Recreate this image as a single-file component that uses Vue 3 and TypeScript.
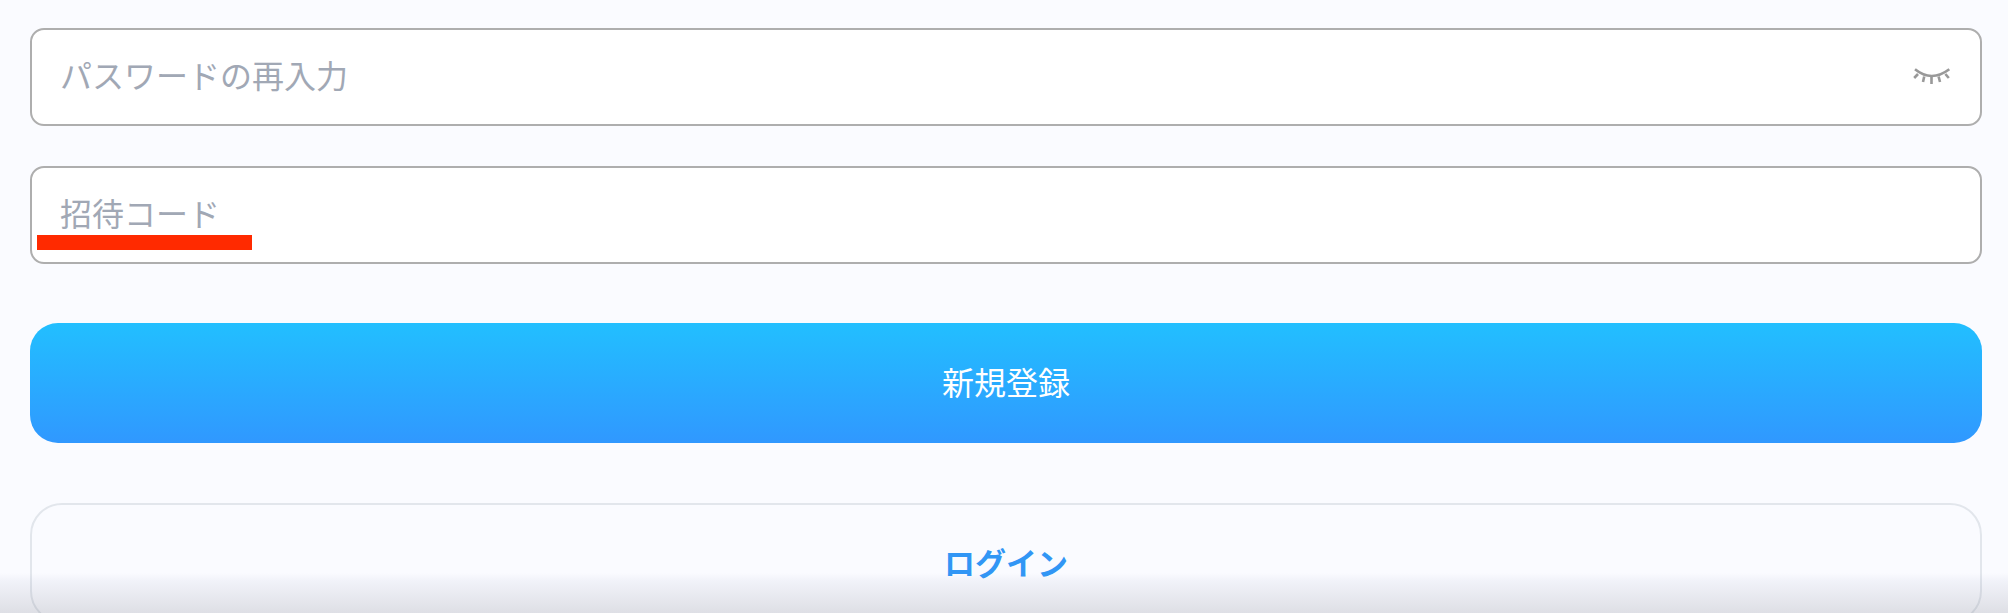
<script setup lang="ts">
const lashes: string[] = [
  'M1.2 10 L5 6',
  'M10 14 L11.2 8.5',
  'M18.5 16 L18.5 9',
  'M27 14 L25.6 8.5',
  'M35.8 10 L32.4 6',
]
</script>

<template>
  <main class="page">
    <div class="field">
      <input class="input" type="password" placeholder="パスワードの再入力" />
      <svg class="eye" width="38" height="17" viewBox="0 0 38 17" fill="none" aria-hidden="true">
        <path d="M2 1.3 Q18.5 14.7 36.3 1.3" />
        <path v-for="(d, i) in lashes" :key="i" :d="d" />
      </svg>
    </div>
    <div class="field second">
      <input class="input" type="text" placeholder="招待コード" />
      <span class="mark"></span>
    </div>
    <button class="btn primary" type="button">新規登録</button>
    <button class="btn secondary" type="button">ログイン</button>
    <div class="fade"></div>
  </main>
</template>

<style>
html, body { margin: 0; background: #fafbff; }
</style>

<style scoped>
.page {
  position: relative;
  box-sizing: border-box;
  height: 613px;
  overflow: hidden;
  padding: 28px 26px 0 30px;
  display: flex;
  flex-direction: column;
  background: #fafbff;
  font-family: "Noto Sans CJK JP", "Liberation Serif", serif;
}
.field { position: relative; flex: none; height: 98px; }
.second { margin-top: 40px; }
.input {
  box-sizing: border-box;
  width: 100%;
  height: 100%;
  padding: 0 100px 6px 28px;
  border: 2px solid #aeaeae;
  border-radius: 14px;
  background: #fff;
  font: inherit;
  font-size: 32px;
  color: #333;
  outline: none;
}
.input::placeholder { color: #a1a8b5; opacity: 1; }
.second .input { padding-bottom: 6px; }
.eye {
  position: absolute;
  left: 1883px;
  top: 40px;
  stroke: #999;
  stroke-width: 2.6;
  stroke-linecap: butt;
}
.mark {
  position: absolute;
  left: 7px;
  top: 69px;
  width: 215px;
  height: 15px;
  background: #ff2a00;
}
.btn {
  flex: none;
  height: 120px;
  padding: 0 0 5px;
  font: inherit;
  font-size: 32px;
  cursor: pointer;
}
.primary {
  height: 120px;
  margin-top: 59px;
  border: 0;
  border-radius: 28px;
  color: #fff;
  background: linear-gradient(180deg, #22bfff 0%, #3098ff 100%);
}
.secondary {
  margin-top: 60px;
  border: 2px solid #e2e6ec;
  border-radius: 32px;
  padding-bottom: 3px;
  background: transparent;
  color: #3196f5;
  font-weight: 700;
  font-size: 31px;
}
.fade {
  position: absolute;
  left: 0;
  right: 0;
  bottom: 0;
  height: 40px;
  pointer-events: none;
  background: linear-gradient(180deg, rgba(120, 125, 170, 0) 0%, rgba(120, 125, 170, 0.07) 20%, rgba(110, 112, 125, 0.2) 100%);
}
</style>
